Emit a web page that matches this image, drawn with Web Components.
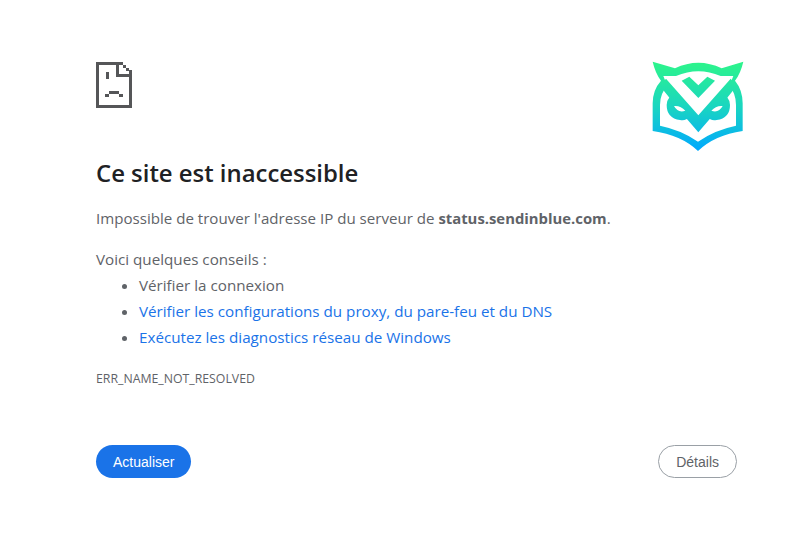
<!DOCTYPE html>
<html lang="fr"><head><meta charset="utf-8"><title>status.sendinblue.com</title>
<style>
html,body{margin:0;background:#fff}
body{font-family:"Open Sans","Noto Sans",sans-serif}
b{font-size:14.85px}
</style></head><body>
<error-page>
  <sad-file slot="icon"></sad-file>
  <owl-logo slot="logo"></owl-logo>
  <span slot="title">Ce site est inaccessible</span>
  <span slot="summary">Impossible de trouver l'adresse IP du serveur de <b>status.sendinblue.com</b>.</span>
  <tips-list slot="tips"></tips-list>
  <span slot="code">ERR_NAME_NOT_RESOLVED</span>
  <pill-button slot="primary" kind="primary">Actualiser</pill-button>
  <pill-button slot="secondary">Détails</pill-button>
</error-page>
<script>
function shadow(el,html){el.attachShadow({mode:'open'}).innerHTML=html}
customElements.define('error-page',class extends HTMLElement{constructor(){super();shadow(this,`<style>
:host{display:block;position:relative;box-sizing:border-box;width:788px;height:539px;padding:62px 51px 0 96px;color:#5f6368;overflow:hidden}
.logo{position:absolute;left:640px;top:50px}
.icon{height:45px}
h1{margin:51px 0 0;font-size:23.9px;line-height:30px;font-weight:600;color:#202124}
.summary{margin:20px 0 0;font-size:15.1px;line-height:20px}
.tips{margin-top:18px}
.code{margin-top:21px;font-size:12.3px;line-height:16px}
.buttons{display:flex;justify-content:space-between;align-items:flex-start;margin-top:58px}
</style>
<div class="logo"><slot name="logo"></slot></div>
<div class="icon"><slot name="icon"></slot></div>
<h1><slot name="title"></slot></h1>
<p class="summary"><slot name="summary"></slot></p>
<div class="tips"><slot name="tips"></slot></div>
<div class="code"><slot name="code"></slot></div>
<div class="buttons"><slot name="primary"></slot><slot name="secondary"></slot></div>`)}});
customElements.define('sad-file',class extends HTMLElement{constructor(){super();shadow(this,`<style>:host{display:block;width:36px;height:46px}svg{display:block}</style>
<svg width="36" height="46" viewBox="0 0 36 46" shape-rendering="crispEdges" fill="#555658">
<path d="M0 0H27V3H3V43H33V8H36V46H0Z"/>
<path d="M20 3H23V12H36V15H20Z"/>
<path d="M27 3H30V6H27ZM30 6H33V9H30Z"/>
<rect x="10" y="10" width="3" height="7"/>
<rect x="13" y="29" width="10" height="3"/><rect x="9" y="32" width="4" height="3"/><rect x="23" y="32" width="4" height="3"/>
</svg>`)}});
customElements.define('owl-logo',class extends HTMLElement{constructor(){super();shadow(this,`<style>:host{display:block;width:120px;height:110px}svg{display:block;filter:blur(.4px)}</style>
<svg width="120" height="110" viewBox="0 0 360 330"><defs><linearGradient id="g" gradientUnits="userSpaceOnUse" x1="0" y1="35" x2="0" y2="303"><stop offset="0" stop-color="#2df58a"/><stop offset=".5" stop-color="#1ad6c0"/><stop offset="1" stop-color="#00a8ff"/></linearGradient></defs>
<path fill="url(#g)" d="M38 35 105 55Q175 22 245 55L310 35Q302 70 285 92 308 120 308 160V243Q224 255 174 303 124 255 38 243V160Q38 120 63 92 46 70 38 35Z"/>
<path fill="#fff" d="M60 227V165Q60 130 82 108L70 78H108Q175 50 242 78H280L268 108Q288 130 288 165V227Q224 240 174 275 124 240 60 227Z"/>
<path fill="url(#g)" d="M60 108 78 86 175 196 272 86 290 108 228 185 175 247 122 185Z"/>
<path fill="url(#g)" d="M125 92 148 80 175 106 202 80 225 92 175 144Z"/>
<path fill="url(#g)" d="M80 165Q82 134 110 134L150 175Q155 215 120 210 80 205 80 165ZM270 165Q268 134 240 134L200 175Q195 215 230 210 270 205 270 165Z"/>
<path fill="#fff" d="M102 168Q122 166 136 182 114 190 102 168ZM248 168Q228 166 214 182 236 190 248 168Z"/>
</svg>`)}});
customElements.define('tips-list',class extends HTMLElement{constructor(){super();shadow(this,`<style>
:host{display:block;font-size:15.2px;line-height:26px}
ul{margin:0;padding:0 0 0 43px}
a{color:#1a73e8;text-decoration:none}
</style>
<div>Voici quelques conseils :</div>
<ul><li>Vérifier la connexion</li><li><a href="#">Vérifier les configurations du proxy, du pare-feu et du DNS</a></li><li><a href="#">Exécutez les diagnostics réseau de Windows</a></li></ul>`)}});
customElements.define('pill-button',class extends HTMLElement{constructor(){super();shadow(this,`<style>
:host{display:inline-block;font-family:"Liberation Sans",Arial,sans-serif;font-size:14px}
button{font:inherit;height:33px;padding:0 17px;border-radius:17px;border:1px solid #9aa0a6;background:#fff;color:#5f6368}
:host([kind=primary]) button{background:#1a73e8;border:0;padding:0 17px;color:#fff}
</style><button><slot></slot></button>`)}});
</script></body></html>
